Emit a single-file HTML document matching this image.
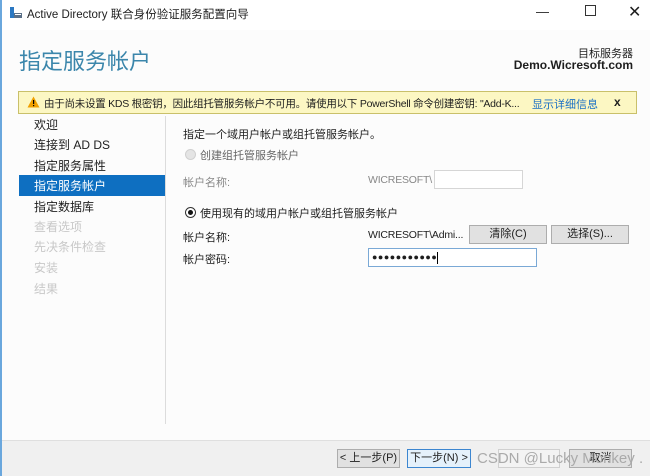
<!DOCTYPE html>
<html><head><meta charset="utf-8"><style>
*{margin:0;padding:0;box-sizing:border-box}
body{width:650px;height:476px;overflow:hidden;background:#fcfcfc;font-family:"Liberation Sans","Noto Sans CJK SC",sans-serif;font-size:11px;color:#1e1e1e;position:relative}
.a{position:absolute;white-space:nowrap}
.btn{position:absolute;height:19px;background:#e1e1e1;border:1px solid #adadad;text-align:center;line-height:17px;font-size:11px}
.nav{position:absolute;left:34px;font-size:12px}
</style></head><body>
<div class="a" style="left:0;top:0;width:2px;height:476px;background:#6aa7dd"></div>
<div class="a" style="left:2px;top:0;width:648px;height:30px;background:#fff"></div>
<svg class="a" style="left:9px;top:6px" width="14" height="14"><rect x="1" y="1" width="4" height="11" fill="#2b78c2"/><rect x="5" y="7" width="8" height="5" fill="#5a6f87"/><rect x="6" y="8" width="6" height="1" fill="#fff"/></svg>
<div class="a" style="left:27px;top:6px;font-size:11.5px">Active Directory 联合身份验证服务配置向导</div>
<div class="a" style="left:536px;top:4px;font-size:13px">—</div>
<div class="a" style="left:585px;top:5px;width:11px;height:11px;border:1px solid #333"></div>
<div class="a" style="left:628px;top:2px;font-size:16px;font-weight:300">✕</div>
<div class="a" style="left:19px;top:44px;font-size:22px;color:#3b86ab">指定服务帐户</div>
<div class="a" style="right:17px;top:45px;font-size:11px;text-align:right">目标服务器</div>
<div class="a" style="right:17px;top:58px;font-size:12px;font-weight:bold">Demo.Wicresoft.com</div>
<div class="a" style="left:18px;top:91px;width:619px;height:23px;background:#fcf7c3;border:1px solid #c9c06a"></div>
<svg class="a" style="left:27px;top:96px" width="13" height="12"><path d="M6.5 0.5 L12.5 11.5 L0.5 11.5Z" fill="#f0a000"/><rect x="6" y="4" width="1.2" height="4" fill="#000"/><rect x="6" y="9" width="1.2" height="1.2" fill="#000"/></svg>
<div class="a" style="left:44px;top:96px;font-size:10.5px;letter-spacing:-0.25px">由于尚未设置 KDS 根密钥，因此组托管服务帐户不可用。请使用以下 PowerShell 命令创建密钥: "Add-K...</div>
<div class="a" style="left:532px;top:96px;font-size:11px;color:#1a6fc4;background:#fcf7c3">显示详细信息</div>
<div class="a" style="left:614px;top:95px;font-size:12px;font-weight:bold">x</div>
<div class="a" style="left:165px;top:116px;width:1px;height:308px;background:#dcdcdc"></div>
<div class="nav" style="top:116px">欢迎</div>
<div class="nav" style="top:136px">连接到 AD DS</div>
<div class="nav" style="top:157px">指定服务属性</div>
<div class="a" style="left:19px;top:175px;width:146px;height:21px;background:#0e6fc1"></div>
<div class="nav" style="top:177px;color:#fff">指定服务帐户</div>
<div class="nav" style="top:198px">指定数据库</div>
<div class="nav" style="top:218px;color:#c8c8c8">查看选项</div>
<div class="nav" style="top:238px;color:#c8c8c8">先决条件检查</div>
<div class="nav" style="top:259px;color:#c8c8c8">安装</div>
<div class="nav" style="top:280px;color:#c8c8c8">结果</div>
<div class="a" style="left:183px;top:126px">指定一个域用户帐户或组托管服务帐户。</div>
<div class="a" style="left:185px;top:149px;width:11px;height:11px;border-radius:50%;background:#e4e4e4;border:1px solid #d0d0d0"></div>
<div class="a" style="left:200px;top:147px;color:#666">创建组托管服务帐户</div>
<div class="a" style="left:183px;top:174px;color:#888">帐户名称:</div>
<div class="a" style="left:368px;top:174px;color:#888;font-size:10.5px;letter-spacing:-0.2px">WICRESOFT\</div>
<div class="a" style="left:434px;top:170px;width:89px;height:19px;border:1px solid #d6d6d6;background:#fff"></div>
<div class="a" style="left:185px;top:207px;width:11px;height:11px;border-radius:50%;background:#fff;border:1px solid #333"></div>
<div class="a" style="left:188px;top:210px;width:5px;height:5px;border-radius:50%;background:#111"></div>
<div class="a" style="left:200px;top:205px">使用现有的域用户帐户或组托管服务帐户</div>
<div class="a" style="left:183px;top:229px">帐户名称:</div>
<div class="a" style="left:368px;top:229px;font-size:10.5px;letter-spacing:-0.2px">WICRESOFT\Admi...</div>
<div class="btn" style="left:469px;top:225px;width:78px">清除(C)</div>
<div class="btn" style="left:551px;top:225px;width:78px">选择(S)...</div>
<div class="a" style="left:183px;top:251px">帐户密码:</div>
<div class="a" style="left:368px;top:248px;width:169px;height:19px;border:1px solid #7aa9d6;background:#fff;font-size:9px;line-height:16px;padding-left:3px;letter-spacing:0.5px">●●●●●●●●●●●<span style="display:inline-block;width:1px;height:12px;background:#000;vertical-align:middle"></span></div>
<div class="a" style="left:2px;top:440px;width:648px;height:36px;background:#f0f0f0;border-top:1px solid #dfdfdf"></div>
<div class="btn" style="left:337px;top:449px;width:63px">&lt; 上一步(P)</div>
<div class="btn" style="left:407px;top:449px;width:64px;border-color:#3c86d0;background:#e5f1fb">下一步(N) &gt;</div>
<div class="btn" style="left:498px;top:449px;width:62px;background:#f3f3f3;border-color:#d0d0d0"></div>
<div class="btn" style="left:569px;top:449px;width:63px">取消</div>
<div class="a" style="left:477px;top:450px;font-size:15px;color:#aaa">CSDN @Lucky Monkey .</div>
</body></html>
